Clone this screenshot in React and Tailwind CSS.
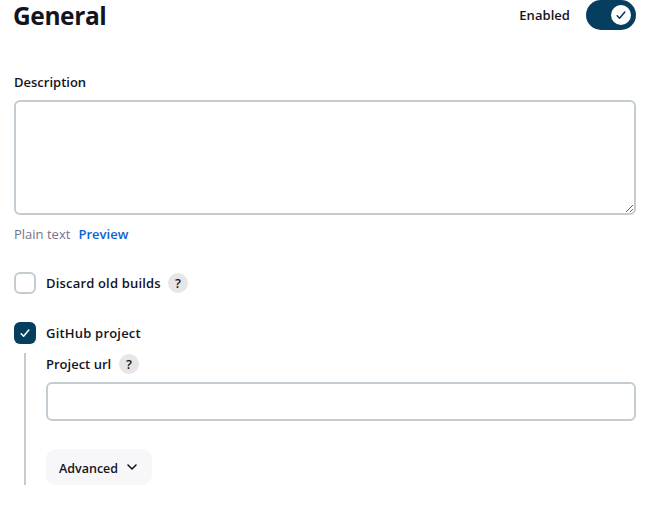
function Check({ size, className }) {
  return (
    <svg width={size} height={size} viewBox="0 0 20 20" fill="none" className={className}>
      <path d="M6.2 10.8 8.6 13.2 13.8 7" stroke="currentColor" strokeWidth="1.6" strokeLinecap="round" strokeLinejoin="round" />
    </svg>
  );
}

function Help() {
  return (
    <button className="flex h-5 w-5 shrink-0 items-center justify-center rounded-full bg-[#e6e6e7] text-[13px] leading-5 font-semibold">
      ?
    </button>
  );
}

export default function App() {
  return (
    <main className="h-[516px] w-[670px] overflow-hidden bg-white pr-[34px] pl-[14px] font-['Open_Sans','Noto_Sans',sans-serif] text-[13px] font-[560] text-[#14141f]">
      <header className="flex h-[30px] items-start justify-between">
        <h1 className="-ml-px text-[24.5px] leading-[32px] font-bold tracking-[-0.4px]">General</h1>
        <label className="flex h-[30px] items-center">
          <span className="mr-4 leading-5 tracking-[0.05px]">Enabled</span>
          <span className="flex h-[30px] w-[50px] items-center justify-end rounded-full bg-[#063e60] pr-[5px]">
            <span className="flex h-5 w-5 items-center justify-center rounded-full bg-white">
              <Check size={20} className="text-[#063e60]" />
            </span>
          </span>
        </label>
      </header>

      <section className="pt-[42px]">
        <label className="block h-7 leading-5">Description</label>
        <textarea className="block h-[115px] w-full resize-y rounded-md border-2 border-[#c3ccd1] bg-white outline-none" />
        <div className="flex h-5 pt-[9px] leading-5">
          <span className="w-[64.5px] font-normal whitespace-nowrap text-[#73738c]">Plain text</span>
          <a className="font-semibold text-[#0b63ce]">Preview</a>
        </div>
      </section>

      <div className="mt-[37px] flex h-[22px] items-center">
        <span className="h-[22px] w-[22px] rounded-md border-2 border-[#c3ccd1]" />
        <span className="ml-[10px] w-[122px] leading-5 tracking-[0.18px] whitespace-nowrap">Discard old builds</span>
        <Help />
      </div>

      <div className="mt-7 flex h-[22px] items-center">
        <span className="flex h-[22px] w-[22px] items-center justify-center rounded-md bg-[#063e60]">
          <Check size={20} className="text-white" />
        </span>
        <span className="ml-[10px] leading-5 tracking-[0.2px]">GitHub project</span>
      </div>

      <section className="mt-[9px] ml-[10px] h-[132px] border-l-2 border-[#c3ccd1] pl-5">
        <div className="flex h-[29px] items-start pt-px">
          <label className="w-[73px] leading-5 whitespace-nowrap">Project url</label>
          <Help />
        </div>
        <input className="block h-[39px] w-full rounded-md border-2 border-[#c3ccd1] outline-none" />
        <button className="mt-7 flex h-9 w-[106px] items-center rounded-[10px] bg-[#f7f7f9] pl-[13px]">
          <span className="w-[58px] pt-[3px] text-[12.5px] leading-5">Advanced</span>
          <svg width="12" height="12" viewBox="0 0 12 12" fill="none" className="ml-[9px]">
            <path d="m2 4 4 4 4-4" stroke="currentColor" strokeWidth="1.6" strokeLinecap="round" strokeLinejoin="round" />
          </svg>
        </button>
      </section>
    </main>
  );
}
